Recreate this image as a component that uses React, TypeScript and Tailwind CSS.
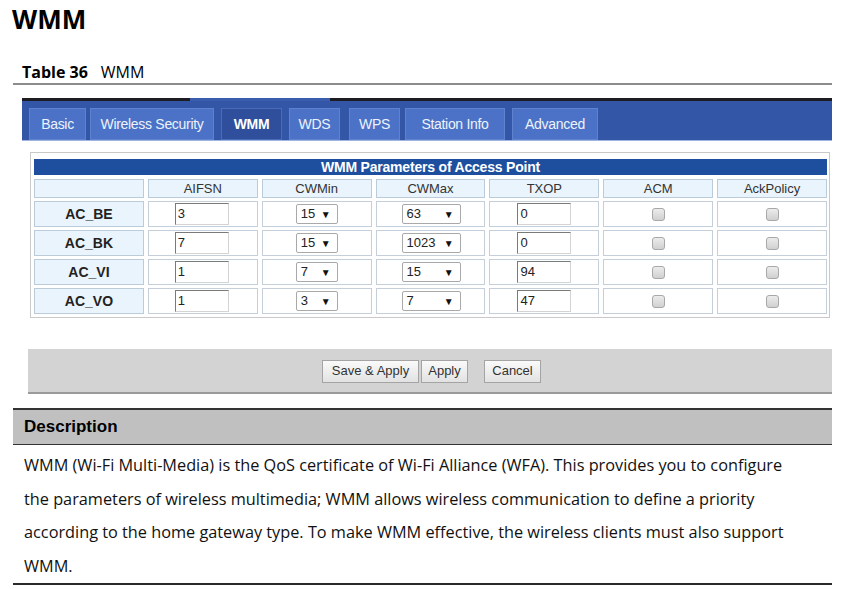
import React from 'react';

type Row = {
  name: string;
  aifsn: string;
  cwMin: string;
  cwMax: string;
  txop: string;
};

const rows: Row[] = [
  { name: 'AC_BE', aifsn: '3', cwMin: '15', cwMax: '63', txop: '0' },
  { name: 'AC_BK', aifsn: '7', cwMin: '15', cwMax: '1023', txop: '0' },
  { name: 'AC_VI', aifsn: '1', cwMin: '7', cwMax: '15', txop: '94' },
  { name: 'AC_VO', aifsn: '1', cwMin: '3', cwMax: '7', txop: '47' },
];

const tabs = [
  { label: 'Basic', cls: 'ml-[7px] w-[57px]' },
  { label: 'Wireless Security', cls: 'ml-[4px] w-[124px]' },
  { label: 'WMM', cls: 'ml-[7px] w-[61px]', active: true },
  { label: 'WDS', cls: 'ml-[7px] w-[51px]' },
  { label: 'WPS', cls: 'ml-[9px] w-[51px]' },
  { label: 'Station Info', cls: 'ml-[5px] w-[100px]' },
  { label: 'Advanced', cls: 'ml-[7px] w-[86px]' },
];

const headers = ['', 'AIFSN', 'CWMin', 'CWMax', 'TXOP', 'ACM', 'AckPolicy'];

const descLines = [
  'WMM (Wi-Fi Multi-Media) is the QoS certificate of Wi-Fi Alliance (WFA). This provides you to configure',
  'the parameters of wireless multimedia; WMM allows wireless communication to define a priority',
  'according to the home gateway type. To make WMM effective, the wireless clients must also support',
  'WMM.',
];

const TextBox: React.FC<{ value: string; className?: string }> = ({ value, className }) => (
  <div
    className={`h-[22px] w-[54px] bg-white border border-t-[#7a7a7a] border-l-[#7a7a7a] border-b-[#d4d4d4] border-r-[#d4d4d4] pl-[2px] text-[13px] leading-[20px] text-[#222] ${className ?? ''}`}
  >
    {value}
  </div>
);

const Select: React.FC<{ value: string; className: string }> = ({ value, className }) => (
  <div
    className={`h-[20px] flex items-center justify-between bg-white border border-[#a9a9a9] rounded-[2px] pl-[4px] pr-[6px] text-[13px] text-[#222] ${className}`}
  >
    <span>{value}</span>
    <span className="text-[10px] text-[#111]">▼</span>
  </div>
);

const Check: React.FC = () => (
  <div className="w-[13px] h-[13px] rounded-[3px] border border-[#a8a8a8] bg-gradient-to-b from-[#ececec] to-[#d0d0d0]" />
);

const Btn: React.FC<{ label: string; className: string }> = ({ label, className }) => (
  <div
    className={`h-[23px] flex items-center justify-center border border-[#a4a4a4] bg-gradient-to-b from-[#fafafa] to-[#e2e2e2] text-[13px] text-[#333] ${className}`}
  >
    {label}
  </div>
);

export default function App() {
  return (
    <div className="w-[844px] h-[589px] bg-white overflow-hidden font-['Open_Sans',sans-serif] text-black">
      {/* Section heading */}
      <h1 className="pl-[12px] pt-[2px] text-[26px] leading-[34px] font-bold">WMM</h1>

      {/* Table caption */}
      <div className="ml-[13px] w-[819px] mt-[26px] border-b-2 border-[#8c8c8c] pl-[9px] pb-[1px] text-[16px] leading-[20px]">
        <span className="font-bold">Table 36</span>
        <span className="ml-[13px]">WMM</span>
      </div>

      {/* Router screenshot */}
      <div className="ml-[22px] w-[810px] mt-[13px] font-['Liberation_Sans',Arial,sans-serif]">
        {/* tab bar */}
        <div className="flex h-[3px]">
          <div className="w-[168px] bg-[#1c1c22]" />
          <div className="w-[140px] bg-[#3a5cad]" />
          <div className="flex-1 bg-[#1c1c22]" />
        </div>
        <div className="h-[40px] bg-[#3456a6] flex items-end border-b border-[#9fb4df]">
          {tabs.map((t) => (
            <div
              key={t.label}
              className={`h-[32px] flex items-center justify-center text-[14px] tracking-[-0.3px] ${t.cls} ${
                t.active
                  ? 'bg-[#2f4f9c] border border-[#4a6cb8] text-white font-bold text-[13px]'
                  : 'bg-[#4b72c6] border border-[#5f82cf] text-[#eef2fb]'
              }`}
            >
              {t.label}
            </div>
          ))}
        </div>

        {/* parameters panel */}
        <div className="ml-[8px] w-[800px] mt-[11px] border border-[#c9c9c9] pt-[6px] pl-[3px] pr-[2px] pb-[3px]">
          <div className="h-[16px] bg-[#1e4f9f] text-white text-[14px] font-bold leading-[16px] text-center tracking-[-0.2px]">
            WMM Parameters of Access Point
          </div>
          <div className="mt-[4px] grid grid-cols-7 gap-x-[4px] gap-y-[3px]">
            {headers.map((h, i) => (
              <div
                key={i}
                className="h-[19px] bg-[#eaf4fc] border border-[#bccbd9] text-[13px] leading-[17px] text-center text-[#333]"
              >
                {h}
              </div>
            ))}
            {rows.map((r) => (
              <React.Fragment key={r.name}>
                <div className="h-[26px] bg-[#eaf4fc] border border-[#bccbd9] flex items-center justify-center text-[14px] font-bold text-[#222]">
                  {r.name}
                </div>
                <div className="h-[26px] border border-[#c5cfd9] flex items-center">
                  <TextBox value={r.aifsn} className="ml-[26px]" />
                </div>
                <div className="h-[26px] border border-[#c5cfd9] flex items-center">
                  <Select value={r.cwMin} className="ml-[33px] w-[42px]" />
                </div>
                <div className="h-[26px] border border-[#c5cfd9] flex items-center">
                  <Select value={r.cwMax} className="ml-[25px] w-[59px]" />
                </div>
                <div className="h-[26px] border border-[#c5cfd9] flex items-center">
                  <TextBox value={r.txop} className="ml-[27px]" />
                </div>
                <div className="h-[26px] border border-[#c5cfd9] flex items-center justify-center">
                  <Check />
                </div>
                <div className="h-[26px] border border-[#c5cfd9] flex items-center justify-center">
                  <Check />
                </div>
              </React.Fragment>
            ))}
          </div>
        </div>

        {/* button bar */}
        <div className="ml-[6px] mt-[31px] h-[45px] bg-[#d3d3d3] border-b-2 border-[#9a9a9a] flex items-center pl-[294px] pt-[1px]">
          <Btn label="Save & Apply" className="w-[97px]" />
          <Btn label="Apply" className="ml-[2px] w-[47px]" />
          <Btn label="Cancel" className="ml-[16px] w-[57px]" />
        </div>
      </div>

      {/* Description */}
      <div className="ml-[13px] w-[819px] mt-[14px]">
        <div className="h-[37px] bg-[#c0c0c0] border-t-2 border-b border-[#333] flex items-center pl-[11px] font-['Liberation_Sans',Arial,sans-serif] font-bold text-[17px]">
          Description
        </div>
        <div className="pl-[11px] pt-[4px] border-b-2 border-[#2a2a2a] text-[16.3px] leading-[33.5px] text-[#111]">
          {descLines.map((l) => (
            <div key={l} className="whitespace-nowrap">
              {l}
            </div>
          ))}
        </div>
      </div>
    </div>
  );
}
